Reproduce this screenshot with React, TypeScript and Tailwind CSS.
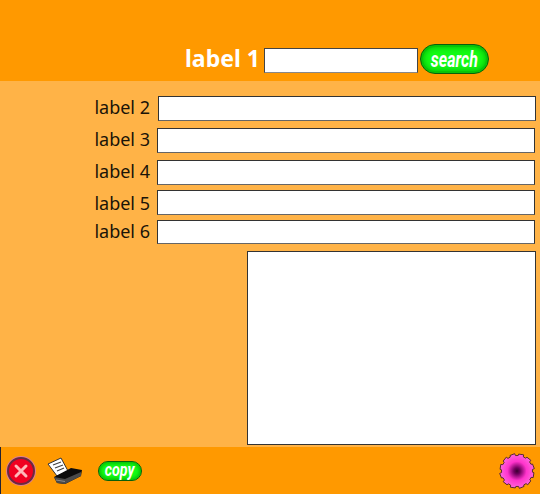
import React from "react";

function Field({ label, ml, mt, h, shift }: { label: string; ml: string; mt: string; h: string; shift: string }) {
  return (
    <div className={`flex items-center ${mt}`}>
      <label className={`w-[150px] text-right text-[18px] leading-none text-[#1a1408] ${shift}`}>{label}</label>
      <div className={`${ml} ${h} w-[378px] bg-white border border-[#333] border-b-[#666]`} />
    </div>
  );
}

function Printer() {
  return (
    <svg width="36" height="28" viewBox="0 0 36 28">
      <path d="M1 7 L14 1 L21 14 L10 19 Z" fill="#fff" stroke="#333" strokeWidth="1" />
      <path d="M6 8 L14 5 M8 11 L16 8 M10 14 L17 11" stroke="#444" strokeWidth="1.2" />
      <path d="M7 20 L24 11 L35 13 L34 19 L18 27 L10 26 Z" fill="#0c0c0c" />
      <path d="M7 20 L18 22 L34 15 L34 19 L18 27 L10 26 Z" fill="#4a4a4a" />
      <path d="M9 23 L18 24.5" stroke="#8a8a8a" strokeWidth="1" />
    </svg>
  );
}

function Gear() {
  const pts: string[] = [];
  const n = 12;
  for (let i = 0; i < n; i++) {
    const a0 = (i / n) * Math.PI * 2 + 0.1;
    const step = (Math.PI * 2) / n;
    const p = (r: number, a: number) => `${18 + r * Math.cos(a)},${18 + r * Math.sin(a)}`;
    pts.push(p(17, a0), p(17.5, a0 + step * 0.55), p(15.5, a0 + step * 0.62), p(15.5, a0 + step * 0.95));
  }
  return (
    <svg width="36" height="36" viewBox="0 0 36 36">
      <defs>
        <radialGradient id="g">
          <stop offset="0" stopColor="#3a0030" />
          <stop offset="0.18" stopColor="#70005e" />
          <stop offset="0.55" stopColor="#ff33cc" />
          <stop offset="1" stopColor="#ff66dd" />
        </radialGradient>
      </defs>
      <polygon points={pts.join(" ")} fill="url(#g)" stroke="#5a2a30" strokeWidth="1" />
    </svg>
  );
}

export default function App() {
  return (
    <div className="flex h-[494px] w-[540px] flex-col overflow-hidden bg-[#ffb347] font-['Noto_Sans',sans-serif]">
      <header className="flex h-[81px] items-start bg-[#ff9900] pl-[185px] pt-[44px]">
        <span className="w-[76px] text-[23px] font-bold leading-[28px] text-white">label 1</span>
        <div className="ml-[3px] mt-[4px] h-[25px] w-[154px] border border-[#444] border-b-[#888] bg-white" />
        <button className="ml-[2px] flex h-[30px] w-[69px] items-center justify-center rounded-full border border-[#0a5f0a] bg-[#14fa14] font-['Roboto',sans-serif] text-[20px] font-bold italic leading-none text-white shadow-[inset_0_0_0_2px_#08c408,inset_0_0_5px_3px_#08c408]">
          <span className="inline-block scale-x-[0.8] scale-y-[1.1]">search</span>
        </button>
      </header>
      <main className="flex flex-1 flex-col">
        <Field label="label 2" ml="ml-[8px]" mt="mt-[15px]" h="h-[25px]" shift="pb-[4px]" />
        <Field label="label 3" ml="ml-[7px]" mt="mt-[7px]" h="h-[25px]" shift="pb-[4px]" />
        <Field label="label 4" ml="ml-[7px]" mt="mt-[7px]" h="h-[25px]" shift="pb-[3px]" />
        <Field label="label 5" ml="ml-[7px]" mt="mt-[5px]" h="h-[25px]" shift="pt-[1px]" />
        <Field label="label 6" ml="ml-[7px]" mt="mt-[5px]" h="h-[24px]" shift="pb-[2px]" />
        <div className="ml-[247px] mt-[7px] h-[194px] w-[289px] border border-[#333] bg-white" />
      </main>
      <footer className="flex h-[47px] items-center border-l border-[#223] bg-[#ff9900] pl-[6px] pr-[5px]">
        <div className="flex h-[28px] w-[28px] items-center justify-center rounded-full border-2 border-[#6b2a40] bg-[#f00020] shadow-[0_0_0_1px_#e08090]">
          <svg width="16" height="16" viewBox="0 0 16 16">
            <path d="M3 3 L13 13 M13 3 L3 13" stroke="#ffb8b8" strokeWidth="3" strokeLinecap="round" />
          </svg>
        </div>
        <div className="ml-[12px]"><Printer /></div>
        <button className="ml-[15px] flex h-[20px] w-[44px] items-center justify-center rounded-full border border-[#0a5f0a] bg-[#14fa14] font-['Roboto',sans-serif] text-[15px] font-bold italic leading-none text-white shadow-[inset_0_0_3px_2px_#08c408]">
          <span className="inline-block scale-x-[0.95] scale-y-[1.2]">copy</span>
        </button>
        <div className="ml-auto"><Gear /></div>
      </footer>
    </div>
  );
}
